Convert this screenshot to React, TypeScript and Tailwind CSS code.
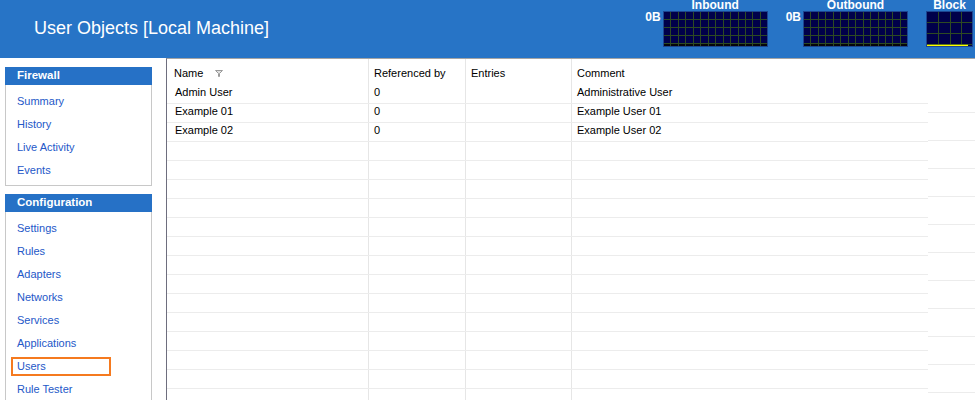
import React from "react";

function Graph({ width, colStep, rowStep, bottomBar, yellow }: { width: number; colStep: number; rowStep: number; bottomBar?: boolean; yellow?: boolean }) {
  const h = 36;
  const vs: number[] = [];
  for (let x = colStep; x < width - 1; x += colStep) vs.push(Math.round(x) + 0.5);
  const hs: number[] = [];
  for (let y = rowStep; y < h - 1; y += rowStep) hs.push(Math.round(y) + 0.5);
  return (
    <svg width={width} height={h} className="block">
      <rect x={0} y={0} width={width} height={h} fill="#00004a" />
      {bottomBar && <rect x={0} y={h - 4} width={width} height={4} fill="#06060c" />}
      {vs.map((x) => (
        <line key={"v" + x} x1={x} x2={x} y1={0} y2={h} stroke="#2d4a22" strokeWidth={1} />
      ))}
      {hs.map((y) => (
        <line key={"h" + y} x1={0} x2={width} y1={y} y2={y} stroke="#2d4a22" strokeWidth={1} />
      ))}
      {yellow && <line x1={1} x2={width - 5} y1={h - 1.5} y2={h - 1.5} stroke="#ffff00" strokeWidth={1.6} />}
      <rect x={0.5} y={0.5} width={width - 1} height={h - 1} fill="none" stroke="#1d4590" strokeWidth={1} />
    </svg>
  );
}

function GraphGroup({ label, showZero, width, colStep, rowStep, bottomBar, yellow }: { label: string; showZero?: boolean; width: number; colStep: number; rowStep: number; bottomBar?: boolean; yellow?: boolean }) {
  return (
    <div className="flex items-start gap-[2px]">
      {showZero && <div className="mt-[11px] text-[12px] leading-[12px] font-bold text-white">0B</div>}
      <div className="flex flex-col items-center">
        <div className="-mt-[1px] h-[12px] text-[12px] leading-[12px] font-bold text-white whitespace-nowrap">{label}</div>
        <div>
          <Graph width={width} colStep={colStep} rowStep={rowStep} bottomBar={bottomBar} yellow={yellow} />
        </div>
      </div>
    </div>
  );
}

function Panel({ title, items, selected }: { title: string; items: string[]; selected?: string }) {
  return (
    <div className="w-[147px]">
      <div className="h-[18px] bg-[#2671c6] pl-[12px] flex items-center text-[11.5px] font-bold text-white leading-none">{title}</div>
      <div className="border border-t-0 border-[#c8c8c8] pt-[5px] pb-[3px]">
        {items.map((it) =>
          it === selected ? (
            <div key={it} className="h-[23px] py-[2px] pl-[5px]">
              <div className="h-[19px] w-[100px] border-2 border-[#f57a1f] pl-[4px] flex items-center text-[11px] text-[#2458c8]">{it}</div>
            </div>
          ) : (
            <div key={it} className="h-[23px] pl-[11px] flex items-center text-[11px] text-[#2458c8]">{it}</div>
          )
        )}
      </div>
    </div>
  );
}

const rows = [
  ["Admin User", "0", "", "Administrative User"],
  ["Example 01", "0", "", "Example User 01"],
  ["Example 02", "0", "", "Example User 02"],
];

export default function App() {
  const body: string[][] = [...rows];
  while (body.length < 17) body.push(["", "", "", ""]);
  const right = Array.from({ length: 12 });
  return (
    <div className="w-[975px] h-[400px] overflow-hidden bg-white font-['Liberation_Sans',Arial,sans-serif]">
      <div className="h-[58px] bg-[#2774c6] flex items-start">
        <div className="pl-[34px] pt-[19px] text-[18px] leading-[18px] text-white whitespace-nowrap">User Objects [Local Machine]</div>
        <div className="ml-auto flex items-start gap-[18px] pr-[2px]">
          <GraphGroup label="Inbound" showZero width={105} colStep={7.45} rowStep={8.1} bottomBar />
          <GraphGroup label="Outbound" showZero width={105} colStep={7.45} rowStep={8.1} bottomBar />
          <GraphGroup label="Block" width={47} colStep={11.75} rowStep={11} yellow />
        </div>
      </div>
      <div className="flex h-[342px]">
        <div className="w-[166px] shrink-0 pl-[5px] pt-[9px]">
          <Panel title="Firewall" items={["Summary", "History", "Live Activity", "Events"]} />
          <div className="h-[8px]" />
          <Panel
            title="Configuration"
            items={["Settings", "Rules", "Adapters", "Networks", "Services", "Applications", "Users", "Rule Tester"]}
            selected="Users"
          />
        </div>
        <div className="flex-1 border-l border-t border-l-[#6e6e7e] border-t-[#a4a4a4] flex overflow-hidden text-[11px] text-black">
          <div className="w-[761px] shrink-0">
            <div className="flex h-[26px]">
              <div className="w-[202px] border-r border-[#e6e6e6] pl-[7px] pt-[7px] leading-[14px] flex items-start">
                <span>Name</span>
                <svg width="8" height="7" className="ml-[12px] mt-[4px]" viewBox="0 0 8 7">
                  <path d="M0.5 0.5 H7.5 L4.5 3.5 V6.5 H3.5 V3.5 Z" fill="#e0e0e0" stroke="#9a9a9a" strokeWidth="1" />
                </svg>
              </div>
              <div className="w-[97px] border-r border-[#e6e6e6] pl-[5px] pt-[7px] leading-[14px]">Referenced by</div>
              <div className="w-[106px] border-r border-[#e6e6e6] pl-[5px] pt-[7px] leading-[14px]">Entries</div>
              <div className="flex-1 pl-[5px] pt-[7px] leading-[14px]">Comment</div>
            </div>
            {body.map((r, i) => (
              <div key={i} className="flex h-[19px] border-b border-[#ececec]">
                <div className="w-[202px] border-r border-[#e6e6e6] pl-[8px] leading-[14px] whitespace-nowrap">{r[0]}</div>
                <div className="w-[97px] border-r border-[#e6e6e6] pl-[5px] leading-[14px]">{r[1]}</div>
                <div className="w-[106px] border-r border-[#e6e6e6] pl-[5px] leading-[14px]">{r[2]}</div>
                <div className="flex-1 pl-[5px] leading-[14px] whitespace-nowrap">{r[3]}</div>
              </div>
            ))}
          </div>
          <div className="flex-1 pt-[26px]">
            {right.map((_, i) => (
              <div key={i} className="h-[28px] border-b border-[#ececec]" />
            ))}
          </div>
        </div>
      </div>
    </div>
  );
}
